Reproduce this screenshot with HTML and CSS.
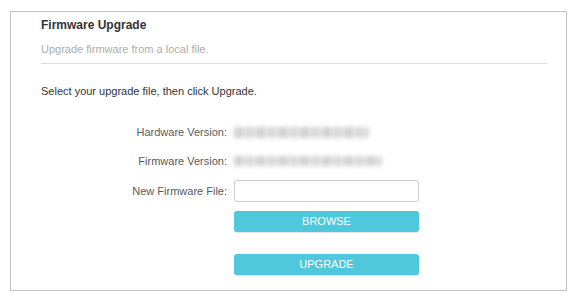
FILE: index.html
```html
<!DOCTYPE html>
<html>
<head>
<meta charset="utf-8">
<link rel="stylesheet" href="styles.css">
</head>
<body>
<div class="panel">
  <div class="title">Firmware Upgrade</div>
  <div class="subtitle">Upgrade firmware from a local file.</div>
  <div class="intro">Select your upgrade file, then click Upgrade.</div>
  <div class="form">
    <div class="label row-hw">Hardware Version:</div>
    <div class="value row-hw"><span class="blur blur-hw"></span></div>
    <div class="label row-fw">Firmware Version:</div>
    <div class="value row-fw"><span class="blur blur-fw"></span></div>
    <div class="label row-file">New Firmware File:</div>
    <div class="value row-file"><div class="file-input"></div></div>
    <div class="spacer"></div>
    <div class="value row-browse"><div class="btn">BROWSE</div></div>
    <div class="spacer"></div>
    <div class="value row-upgrade"><div class="btn">UPGRADE</div></div>
  </div>
</div>
</body>
</html>
```
FILE: styles.css
```css
html, body {
  margin: 0;
  padding: 0;
  background: #ffffff;
}
body {
  font-family: "Liberation Sans", Arial, sans-serif;
  color: #333333;
  width: 573px;
  height: 300px;
  overflow: hidden;
}
.panel {
  margin: 11px 6px 0 10px;
  height: 280px;
  border: 1px solid #c3c3c3;
  box-sizing: border-box;
  padding: 5px 19px 0 30px;
}
.title {
  font-size: 12px;
  font-weight: bold;
  line-height: 16px;
  color: #333333;
}
.subtitle {
  font-size: 11px;
  line-height: 16px;
  color: #adadad;
  margin-top: 8px;
  padding-bottom: 6px;
  border-bottom: 1px solid #dcdcdc;
}
.intro {
  font-size: 11px;
  line-height: 16px;
  margin-top: 19px;
  color: #333333;
}
.form {
  display: grid;
  grid-template-columns: 186px 185px;
  column-gap: 7px;
  grid-template-rows: 28px 29px 32px 31px 43px;
  margin-top: 19px;
  font-size: 11px;
}
.label {
  text-align: right;
  color: #5a5a5a;
  display: flex;
  align-items: center;
  justify-content: flex-end;
}
.value {
  display: flex;
  align-items: center;
}
.blur {
  display: block;
  height: 10px;
  background: repeating-linear-gradient(90deg, #d2d2d2 0 9px, #e6e6e6 9px 12px, #d8d8d8 12px 20px, #eeeeee 20px 22px);
  filter: blur(2px);
}
.blur-hw {
  width: 135px;
  height: 11px;
}
.blur-fw {
  width: 148px;
}
.file-input {
  width: 183px;
  height: 20px;
  border: 1px solid #cccccc;
  border-radius: 3px;
}
.row-browse, .row-upgrade {
  align-items: flex-start;
}
.row-browse {
  padding-top: 4px;
}
.row-upgrade {
  padding-top: 16px;
}
.btn {
  width: 185px;
  height: 21px;
  border-radius: 3px;
  background: #4fc8dc;
  color: #ffffff;
  font-size: 11px;
  line-height: 21px;
  text-align: center;
  box-shadow: 0 1px 1px rgba(0,0,0,0.12);
}
```
